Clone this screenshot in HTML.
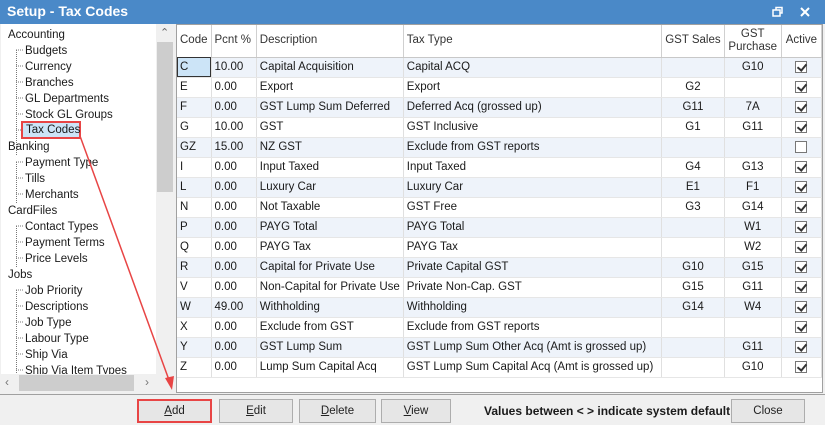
<!DOCTYPE html>
<html><head><meta charset="utf-8"><style>
*{box-sizing:border-box;margin:0;padding:0}
body{width:825px;height:425px;overflow:hidden;background:#f0f0f0;font-family:"Liberation Sans","DejaVu Sans",sans-serif;font-size:11.5px;color:#1a1a1a;position:relative}
.a{position:absolute;white-space:nowrap}
#title{left:0;top:0;width:825px;height:24px;background:#4a89c8;color:#fff;font-weight:bold;font-size:14px;padding:3px 0 0 7px}
#tree{left:1px;top:24px;width:173px;height:368px;background:#fff;border-right:1px solid #c8c8c8}
.vl{position:absolute;border-left:1px dotted #777;width:0}
#grid{left:176px;top:24px;width:647px;height:369px;background:#fff;border:1px solid #a0a0a0}
table{border-collapse:collapse;position:absolute;left:0;top:0;table-layout:fixed}
td,th{height:20px;border-right:1px solid #e0e0e0;border-bottom:1px solid #e6e6e6;padding:0 3px;font-weight:normal;text-align:left;overflow:hidden;white-space:nowrap}
th{height:32px;background:#fff;border-right:1px solid #d0d0d0;border-bottom:1px solid #c8c8c8;color:#333;line-height:13px}
tr:nth-child(even) td{background:#eef3fa}
.c{text-align:center}
.cb{display:inline-block;width:12px;height:12px;border:1px solid #777;background:#fff;position:relative;vertical-align:middle}
.cb.on::after{content:"";position:absolute;left:3px;top:0px;width:4px;height:7px;border:solid #333;border-width:0 2px 2px 0;transform:rotate(40deg)}
.btn{position:absolute;top:399px;height:24px;border:1px solid #adadad;background:#e6e6e6;text-align:center;line-height:22px;color:#222}
.t{position:absolute;line-height:16px;white-space:nowrap}
</style></head><body>
<div class="a" id="title">Setup - Tax Codes</div>
<svg class="a" style="left:772px;top:6px" width="12" height="12"><rect x="1" y="4" width="7" height="6" fill="none" stroke="#fff" stroke-width="1.5"/><path d="M4 4V1.5H10V7H8" fill="none" stroke="#fff" stroke-width="1.5"/></svg>
<svg class="a" style="left:800px;top:7px" width="10" height="10"><path d="M1 1L9 9M9 1L1 9" stroke="#fff" stroke-width="2"/></svg>

<div class="a" id="tree">
<div class="vl" style="left:15px;top:26px;height:105px"></div>
<div class="vl" style="left:15px;top:138px;height:41px"></div>
<div class="vl" style="left:15px;top:202px;height:41px"></div>
<div class="vl" style="left:15px;top:266px;height:93px"></div>
</div>
<div class="a" style="left:156px;top:24px;width:18px;height:350px;background:#f0f0f0"></div>
<div class="a" style="left:157px;top:42px;width:16px;height:150px;background:#cdcdcd"></div>
<div class="a" style="left:160px;top:26px;color:#666;font-size:11px">&#8963;</div>
<div class="a" style="left:0;top:374px;width:174px;height:18px;background:#f0f0f0"></div>
<div class="a" style="left:19px;top:375px;width:115px;height:16px;background:#cdcdcd"></div>
<div class="a" style="left:5px;top:375px;color:#777;font-size:12px">&lsaquo;</div>
<div class="a" style="left:145px;top:375px;color:#777;font-size:12px">&rsaquo;</div>

<div class="a" id="grid">
<table>
<colgroup><col style="width:32px"><col style="width:50px"><col style="width:126px"><col style="width:271px"><col style="width:61px"><col style="width:61px"><col style="width:45px"></colgroup>
<tr><th>Code</th><th>Pcnt %</th><th>Description</th><th>Tax Type</th><th class="c">GST Sales</th><th class="c">GST<br>Purchase</th><th class="c">Active</th></tr>
<tr><td style="background:#cce4f7;outline:1px solid #333;outline-offset:-1px">C</td><td>10.00</td><td>Capital Acquisition</td><td>Capital ACQ</td><td class="c"></td><td class="c">G10</td><td class="c"><span class="cb on"></span></td></tr>
<tr><td>E</td><td>0.00</td><td>Export</td><td>Export</td><td class="c">G2</td><td class="c"></td><td class="c"><span class="cb on"></span></td></tr>
<tr><td>F</td><td>0.00</td><td>GST Lump Sum Deferred</td><td>Deferred Acq (grossed up)</td><td class="c">G11</td><td class="c">7A</td><td class="c"><span class="cb on"></span></td></tr>
<tr><td>G</td><td>10.00</td><td>GST</td><td>GST Inclusive</td><td class="c">G1</td><td class="c">G11</td><td class="c"><span class="cb on"></span></td></tr>
<tr><td>GZ</td><td>15.00</td><td>NZ GST</td><td>Exclude from GST reports</td><td class="c"></td><td class="c"></td><td class="c"><span class="cb"></span></td></tr>
<tr><td>I</td><td>0.00</td><td>Input Taxed</td><td>Input Taxed</td><td class="c">G4</td><td class="c">G13</td><td class="c"><span class="cb on"></span></td></tr>
<tr><td>L</td><td>0.00</td><td>Luxury Car</td><td>Luxury Car</td><td class="c">E1</td><td class="c">F1</td><td class="c"><span class="cb on"></span></td></tr>
<tr><td>N</td><td>0.00</td><td>Not Taxable</td><td>GST Free</td><td class="c">G3</td><td class="c">G14</td><td class="c"><span class="cb on"></span></td></tr>
<tr><td>P</td><td>0.00</td><td>PAYG Total</td><td>PAYG Total</td><td class="c"></td><td class="c">W1</td><td class="c"><span class="cb on"></span></td></tr>
<tr><td>Q</td><td>0.00</td><td>PAYG Tax</td><td>PAYG Tax</td><td class="c"></td><td class="c">W2</td><td class="c"><span class="cb on"></span></td></tr>
<tr><td>R</td><td>0.00</td><td>Capital for Private Use</td><td>Private Capital GST</td><td class="c">G10</td><td class="c">G15</td><td class="c"><span class="cb on"></span></td></tr>
<tr><td>V</td><td>0.00</td><td>Non-Capital for Private Use</td><td>Private Non-Cap. GST</td><td class="c">G15</td><td class="c">G11</td><td class="c"><span class="cb on"></span></td></tr>
<tr><td>W</td><td>49.00</td><td>Withholding</td><td>Withholding</td><td class="c">G14</td><td class="c">W4</td><td class="c"><span class="cb on"></span></td></tr>
<tr><td>X</td><td>0.00</td><td>Exclude from GST</td><td>Exclude from GST reports</td><td class="c"></td><td class="c"></td><td class="c"><span class="cb on"></span></td></tr>
<tr><td>Y</td><td>0.00</td><td>GST Lump Sum</td><td>GST Lump Sum Other Acq (Amt is grossed up)</td><td class="c"></td><td class="c">G11</td><td class="c"><span class="cb on"></span></td></tr>
<tr><td>Z</td><td>0.00</td><td>Lump Sum Capital Acq</td><td>GST Lump Sum Capital Acq (Amt is grossed up)</td><td class="c"></td><td class="c">G10</td><td class="c"><span class="cb on"></span></td></tr>
</table>
</div>

<div class="a" style="left:0;top:394px;width:825px;height:1px;background:#a0a0a0"></div>
<div class="btn" style="left:137px;width:75px;border:2px solid #e84545;line-height:20px"><u>A</u>dd</div>
<div class="btn" style="left:219px;width:74px"><u>E</u>dit</div>
<div class="btn" style="left:299px;width:77px"><u>D</u>elete</div>
<div class="btn" style="left:381px;width:70px"><u>V</u>iew</div>
<div class="a" style="left:484px;top:404px;font-weight:bold;font-size:12px;width:246px;overflow:hidden">Values between &lt; &gt; indicate system defaults</div>
<div class="btn" style="left:731px;width:74px">Close</div>

<div class="t" style="left:8px;top:27px">Accounting</div>
<div class="t" style="left:25px;top:43px">Budgets</div>
<div class="t" style="left:25px;top:59px">Currency</div>
<div class="t" style="left:25px;top:75px">Branches</div>
<div class="t" style="left:25px;top:91px">GL Departments</div>
<div class="t" style="left:25px;top:107px">Stock GL Groups</div>
<div class="a" style="left:21px;top:121px;width:60px;height:18px;border:2px solid #e84545;background:#cce4f7;padding-left:3px;line-height:15px">Tax Codes</div>
<div class="t" style="left:8px;top:139px">Banking</div>
<div class="t" style="left:25px;top:155px">Payment Type</div>
<div class="t" style="left:25px;top:171px">Tills</div>
<div class="t" style="left:25px;top:187px">Merchants</div>
<div class="t" style="left:8px;top:203px">CardFiles</div>
<div class="t" style="left:25px;top:219px">Contact Types</div>
<div class="t" style="left:25px;top:235px">Payment Terms</div>
<div class="t" style="left:25px;top:251px">Price Levels</div>
<div class="t" style="left:8px;top:267px">Jobs</div>
<div class="t" style="left:25px;top:283px">Job Priority</div>
<div class="t" style="left:25px;top:299px">Descriptions</div>
<div class="t" style="left:25px;top:315px">Job Type</div>
<div class="t" style="left:25px;top:331px">Labour Type</div>
<div class="t" style="left:25px;top:347px">Ship Via</div>
<div class="t" style="left:25px;top:363px;height:11px;overflow:hidden">Ship Via Item Types</div>
<svg class="a" style="left:0;top:0" width="825" height="425">
<g stroke="#777" stroke-dasharray="1,1">
<path d="M16 50H24M16 66H24M16 82H24M16 98H24M16 114H24M16 130H21M16 162H24M16 178H24M16 194H24M16 226H24M16 242H24M16 258H24M16 290H24M16 306H24M16 322H24M16 338H24M16 354H24M16 370H24"/>
</g>
<path d="M80 136L169 380" stroke="#e84545" stroke-width="1.5"/>
<path d="M165 378L172 390L174 376Z" fill="#e84545"/>
</svg>
</body></html>
